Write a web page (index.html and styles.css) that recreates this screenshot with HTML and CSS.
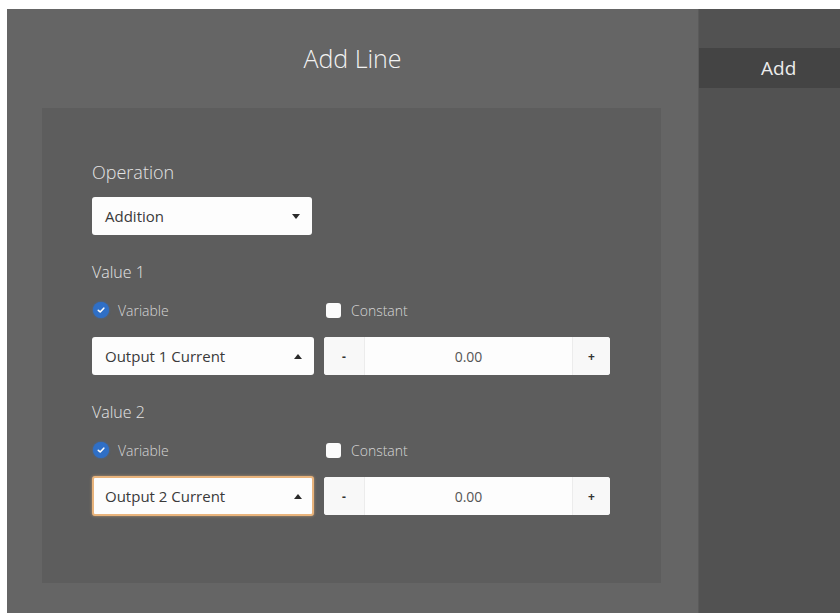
FILE: index.html
```html
<!DOCTYPE html>
<html lang="en">
<head>
<meta charset="utf-8">
<title>Add Line</title>
<link rel="stylesheet" href="styles.css">
</head>
<body>
<div class="frame">
  <main class="editor">
    <h1 class="title">Add Line</h1>
    <section class="card">
      <div class="field-label">Operation</div>
      <div class="select op-select">
        <span>Addition</span>
        <span class="caret down"></span>
      </div>

      <div class="group-label">Value 1</div>
      <div class="grid">
        <label class="check"><span class="box on"><svg viewBox="0 0 10 10"><path d="M2.3 5.3 L4.2 7 L7.8 3.2" /></svg></span>Variable</label>
        <label class="check"><span class="box"></span>Constant</label>
        <div class="select">
          <span>Output 1 Current</span>
          <span class="caret up"></span>
        </div>
        <div class="number">
          <span class="step">-</span>
          <span class="num-value">0.00</span>
          <span class="step plus">+</span>
        </div>
      </div>

      <div class="group-label">Value 2</div>
      <div class="grid">
        <label class="check"><span class="box on"><svg viewBox="0 0 10 10"><path d="M2.3 5.3 L4.2 7 L7.8 3.2" /></svg></span>Variable</label>
        <label class="check"><span class="box"></span>Constant</label>
        <div class="select focused">
          <span>Output 2 Current</span>
          <span class="caret up"></span>
        </div>
        <div class="number">
          <span class="step">-</span>
          <span class="num-value">0.00</span>
          <span class="step plus">+</span>
        </div>
      </div>
    </section>
  </main>
  <aside class="side">
    <div class="tab">Add</div>
  </aside>
</div>
</body>
</html>
```
FILE: styles.css
```css
html, body {
  margin: 0;
  padding: 0;
  background: #ffffff;
  height: 100%;
  overflow: hidden;
}

body {
  font-family: "Open Sans", "Noto Sans", sans-serif;
}

.frame {
  display: flex;
  margin: 9px 0 0 7px;
  height: 604px;
}

.editor {
  width: 691px;
  background: #656565;
  padding-top: 33px;
  box-sizing: border-box;
}

.title {
  margin: 0;
  text-align: center;
  font-weight: 300;
  font-size: 25px;
  line-height: 32px;
  color: #f2f2f2;
}

.card {
  margin: 34px 0 0 35px;
  width: 619px;
  height: 475px;
  box-sizing: border-box;
  background: #5d5d5d;
  padding: 53px 0 0 50px;
}

.field-label {
  font-size: 18px;
  line-height: 22px;
  font-weight: 300;
  color: #e4e4e4;
}

.group-label {
  margin-top: 26px;
  font-size: 16px;
  line-height: 22px;
  font-weight: 300;
  color: #e4e4e4;
}

.select {
  box-sizing: border-box;
  height: 38px;
  background: #fdfdfd;
  border-radius: 3px;
  display: flex;
  align-items: center;
  justify-content: space-between;
  padding: 0 12px 0 13px;
  font-size: 15px;
  color: #3a3a3a;
}

.op-select {
  width: 220px;
  margin-top: 14px;
}

.select.focused {
  border: 2px solid #e9b47c;
  padding-left: 11px;
  padding-right: 10px;
  height: 40px;
  margin-top: -1px;
  box-shadow: 0 0 3px rgba(233, 180, 124, 0.6);
}

.caret {
  width: 0;
  height: 0;
  border-left: 4px solid transparent;
  border-right: 4px solid transparent;
}

.caret.down {
  border-top: 5px solid #2a2a2a;
}

.caret.up {
  border-bottom: 5px solid #2a2a2a;
}

.grid {
  display: grid;
  grid-template-columns: 222px 286px;
  column-gap: 10px;
  row-gap: 17px;
  margin-top: 17px;
}

.check {
  display: flex;
  align-items: center;
  height: 20px;
  font-size: 14px;
  font-weight: 300;
  color: #d6d6d6;
}

.grid .check:nth-child(2) {
  padding-left: 2px;
}

.box {
  width: 15px;
  height: 15px;
  border-radius: 3px;
  background: #fbfbfb;
  margin-right: 10px;
  display: flex;
  align-items: center;
  justify-content: center;
}

.box.on {
  width: 16px;
  height: 16px;
  border-radius: 50%;
  background: #2f6fc6;
  margin-left: 1px;
  margin-right: 9px;
  box-shadow: 0 0 2px #2f6fc6;
}

.box svg {
  width: 10px;
  height: 10px;
}

.box svg path {
  fill: none;
  stroke: #ffffff;
  stroke-width: 1.6;
  stroke-linecap: round;
  stroke-linejoin: round;
}

.number {
  height: 38px;
  background: #fdfdfd;
  border-radius: 3px;
  display: flex;
  align-items: stretch;
  color: #444;
  font-size: 14px;
}

.step {
  width: 40px;
  display: flex;
  align-items: center;
  justify-content: center;
  font-weight: 700;
  font-size: 12px;
  color: #333;
  border-right: 1px solid #ececec;
  background: #f8f8f8;
  border-radius: 3px 0 0 3px;
}

.step.plus {
  width: 37px;
  border-right: none;
  border-left: 1px solid #ececec;
  border-radius: 0 3px 3px 0;
}

.num-value {
  flex: 1;
  display: flex;
  align-items: center;
  justify-content: center;
  color: #555;
}

.side {
  flex: 1;
  background: #525252;
  border-left: 1px solid #5a5a5a;
  padding-top: 39px;
}

.tab {
  height: 40px;
  background: #444444;
  color: #ececec;
  font-size: 19px;
  line-height: 40px;
  padding-left: 62px;
}
```
